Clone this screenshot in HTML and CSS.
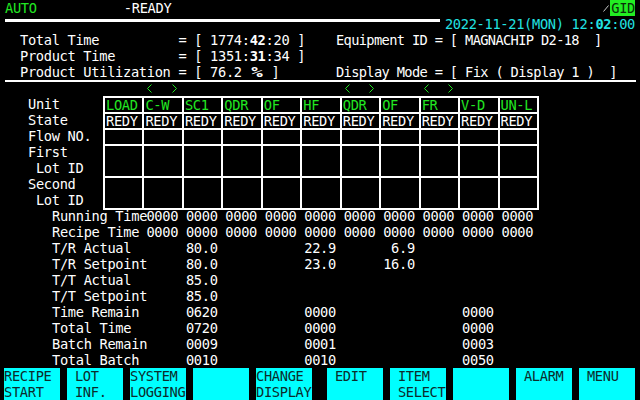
FILE: index.html
```html
<!DOCTYPE html>
<html>
<head>
<meta charset="utf-8">
<title>Equipment Status</title>
<link rel="stylesheet" href="styles.css">
</head>
<body>
<div class="screen">
  <header class="top">
    <div class="status"><span class="green">AUTO</span>           -READY</div>
    <div class="gid"><svg class="slash" width="6" height="7" viewBox="0 0 6 7"><line x1="0.5" y1="6.5" x2="5.5" y2="0.5"/></svg><span class="gid-box">GID</span></div>
    <div class="rule-thick"></div>
    <div class="date">2022-11-21(MON) 12:<b>02</b>:00</div>
  </header>

  <section class="info">
    <div class="info-left">
      <div class="line">Total Time          = [ 1774:<b>42</b>:20 ]</div>
      <div class="line">Product Time        = [ 1351:<b>31</b>:34 ]</div>
      <div class="line">Product Utilization = [ 76.2 <span class="pct">%</span> ]</div>
    </div>
    <div class="info-right">
      <div class="line">Equipment ID = [ MAGNACHIP D2-18  ]</div>
      <div class="line"> </div>
      <div class="line">Display Mode = [ Fix ( Display 1 )  ]</div>
    </div>
  </section>

  <div class="arrows">
    <div></div>
    <div class="arr"><svg viewBox="0 0 5 9"><polyline points="4.5,0.5 0.5,4.5 4.5,8.5"/></svg><svg viewBox="0 0 5 9"><polyline points="0.5,0.5 4.5,4.5 0.5,8.5"/></svg></div>
    <div></div><div></div><div></div><div></div>
    <div class="arr"><svg viewBox="0 0 5 9"><polyline points="4.5,0.5 0.5,4.5 4.5,8.5"/></svg><svg viewBox="0 0 5 9"><polyline points="0.5,0.5 4.5,4.5 0.5,8.5"/></svg></div>
    <div></div>
    <div class="arr"><svg viewBox="0 0 5 9"><polyline points="4.5,0.5 0.5,4.5 4.5,8.5"/></svg><svg viewBox="0 0 5 9"><polyline points="0.5,0.5 4.5,4.5 0.5,8.5"/></svg></div>
    <div></div><div></div>
  </div>

  <section class="units">
    <div class="unit-labels">
      <div class="line">Unit</div>
      <div class="line">State</div>
      <div class="line">Flow NO.</div>
      <div class="line">First</div>
      <div class="line"> Lot ID</div>
      <div class="line">Second</div>
      <div class="line"> Lot ID</div>
    </div>
    <div class="unit-table">
      <div class="cell head">LOAD</div>
      <div class="cell head">C-W</div>
      <div class="cell head">SC1</div>
      <div class="cell head">QDR</div>
      <div class="cell head">OF</div>
      <div class="cell head">HF</div>
      <div class="cell head">QDR</div>
      <div class="cell head">OF</div>
      <div class="cell head">FR</div>
      <div class="cell head">V-D</div>
      <div class="cell head">UN-L</div>

      <div class="cell">REDY</div>
      <div class="cell">REDY</div>
      <div class="cell">REDY</div>
      <div class="cell">REDY</div>
      <div class="cell">REDY</div>
      <div class="cell">REDY</div>
      <div class="cell">REDY</div>
      <div class="cell">REDY</div>
      <div class="cell">REDY</div>
      <div class="cell">REDY</div>
      <div class="cell">REDY</div>

      <div class="cell"></div><div class="cell"></div><div class="cell"></div><div class="cell"></div><div class="cell"></div><div class="cell"></div><div class="cell"></div><div class="cell"></div><div class="cell"></div><div class="cell"></div><div class="cell"></div>
      <div class="cell"></div><div class="cell"></div><div class="cell"></div><div class="cell"></div><div class="cell"></div><div class="cell"></div><div class="cell"></div><div class="cell"></div><div class="cell"></div><div class="cell"></div><div class="cell"></div>
      <div class="cell"></div><div class="cell"></div><div class="cell"></div><div class="cell"></div><div class="cell"></div><div class="cell"></div><div class="cell"></div><div class="cell"></div><div class="cell"></div><div class="cell"></div><div class="cell"></div>
    </div>
  </section>

  <section class="data">
    <div class="row"><span class="lbl">Running Time</span><span>0000</span><span>0000</span><span>0000</span><span>0000</span><span>0000</span><span>0000</span><span>0000</span><span>0000</span><span>0000</span><span>0000</span></div>
    <div class="row"><span class="lbl">Recipe Time</span><span>0000</span><span>0000</span><span>0000</span><span>0000</span><span>0000</span><span>0000</span><span>0000</span><span>0000</span><span>0000</span><span>0000</span></div>
    <div class="row"><span class="lbl">T/R Actual</span><span class="c2">80.0</span><span class="c5">22.9</span><span class="c7"> 6.9</span></div>
    <div class="row"><span class="lbl">T/R Setpoint</span><span class="c2">80.0</span><span class="c5">23.0</span><span class="c7">16.0</span></div>
    <div class="row"><span class="lbl">T/T Actual</span><span class="c2">85.0</span></div>
    <div class="row"><span class="lbl">T/T Setpoint</span><span class="c2">85.0</span></div>
    <div class="row"><span class="lbl">Time Remain</span><span class="c2">0620</span><span class="c5">0000</span><span class="c9">0000</span></div>
    <div class="row"><span class="lbl">Total Time</span><span class="c2">0720</span><span class="c5">0000</span><span class="c9">0000</span></div>
    <div class="row"><span class="lbl">Batch Remain</span><span class="c2">0009</span><span class="c5">0001</span><span class="c9">0003</span></div>
    <div class="row"><span class="lbl">Total Batch</span><span class="c2">0010</span><span class="c5">0010</span><span class="c9">0050</span></div>
  </section>

  <footer class="keys">
    <div class="key">RECIPE<br>START</div>
    <div class="key"> LOT<br> INF.</div>
    <div class="key">SYSTEM<br>LOGGING</div>
    <div class="key"></div>
    <div class="key">CHANGE<br>DISPLAY</div>
    <div class="key key-split"> EDIT</div>
    <div class="key"> ITEM<br> SELECT</div>
    <div class="key"></div>
    <div class="key"> ALARM</div>
    <div class="key"> MENU</div>
  </footer>
</div>
</body>
</html>
```

FILE: styles.css
```css
* {
  box-sizing: border-box;
  margin: 0;
  padding: 0;
}

html,
body {
  background: #000;
}

body {
  width: 640px;
  height: 400px;
  overflow: hidden;
  font-family: "DejaVu Sans Mono", "Liberation Mono", monospace;
  font-size: 13.7px;
  letter-spacing: -0.32px;
  line-height: 16px;
  color: #fff;
}

.screen {
  width: 640px;
  height: 400px;
  display: flex;
  flex-direction: column;
}

.line {
  height: 16px;
  white-space: pre;
}

b {
  font-weight: bold;
}

/* ---------- top bar ---------- */
.top {
  display: grid;
  grid-template-columns: 1fr auto;
  grid-template-rows: 16px 16px;
  padding: 0 5px;
}

.status {
  white-space: pre;
}

.green {
  color: #22e622;
}

.gid {
  display: flex;
  align-items: flex-start;
  justify-content: flex-end;
}

.slash {
  stroke: #c8c8c8;
  stroke-width: 1;
  margin-top: 5px;
  margin-right: 1px;
}

.gid-box {
  display: inline-block;
  height: 16px;
  line-height: 16px;
  padding: 0 0 0 1px;
  background: #22ee22;
  color: #0a2e0a;
}

.rule-thick {
  width: 435px;
  height: 3px;
  margin-top: 3px;
  background: #fff;
}

.date {
  color: #22e2e2;
  white-space: pre;
}

/* ---------- info ---------- */
.info {
  display: grid;
  grid-template-columns: 316px 1fr;
  height: 50px;
  margin: 0 4px 0 5px;
  padding-left: 15px;
  border-bottom: 2px solid #fff;
}

.info-right {
  letter-spacing: -0.65px;
}

.pct {
  display: inline-block;
  width: 14px;
  text-align: center;
  font-weight: bold;
  letter-spacing: 0;
  transform: scaleX(1.4);
}

/* ---------- arrows ---------- */
.arrows {
  display: grid;
  grid-template-columns: repeat(11, 1fr);
  column-gap: 2px;
  width: 436px;
  height: 14px;
  margin-left: 103px;
  padding: 0 2px;
}

.arr {
  display: flex;
  justify-content: space-between;
  padding: 2px 5px 0 3px;
}

.arr svg {
  width: 5px;
  height: 9px;
  fill: none;
  stroke: #22e622;
  stroke-width: 1;
}

/* ---------- unit table ---------- */
.units {
  display: flex;
  align-items: flex-start;
  height: 112px;
}

.unit-labels {
  width: 103px;
  padding-left: 28px;
}

.unit-table {
  width: 436px;
  display: grid;
  grid-template-columns: repeat(11, 1fr);
  grid-template-rows: 14px 14px 14px 30px 30px;
  gap: 2px;
  padding: 2px;
  background: #fff;
}

.cell {
  background: #000;
  line-height: 14px;
  padding-left: 1px;
  white-space: pre;
}

.cell.head {
  color: #22e622;
}

/* ---------- data rows ---------- */
.data {
  height: 160px;
}

.row {
  display: grid;
  grid-template-columns: 92.45px repeat(10, 39.4545px);
  height: 16px;
  padding-left: 52px;
  white-space: pre;
}

.row > span {
  padding-left: 2px;
}

.row > .lbl {
  padding-left: 0;
  grid-column: 1;
}

.c2 { grid-column: 3; }
.c5 { grid-column: 6; }
.c7 { grid-column: 8; }
.c9 { grid-column: 10; }

/* ---------- soft keys ---------- */
.keys {
  display: flex;
  gap: 7px;
  height: 32px;
  padding-left: 4px;
}

.key {
  width: 56px;
  height: 32px;
  flex: none;
  background: #00ffff;
  color: #0c2c2c;
  white-space: pre;
  line-height: 16px;
}

.key-split {
  margin-left: 8px;
}
```
